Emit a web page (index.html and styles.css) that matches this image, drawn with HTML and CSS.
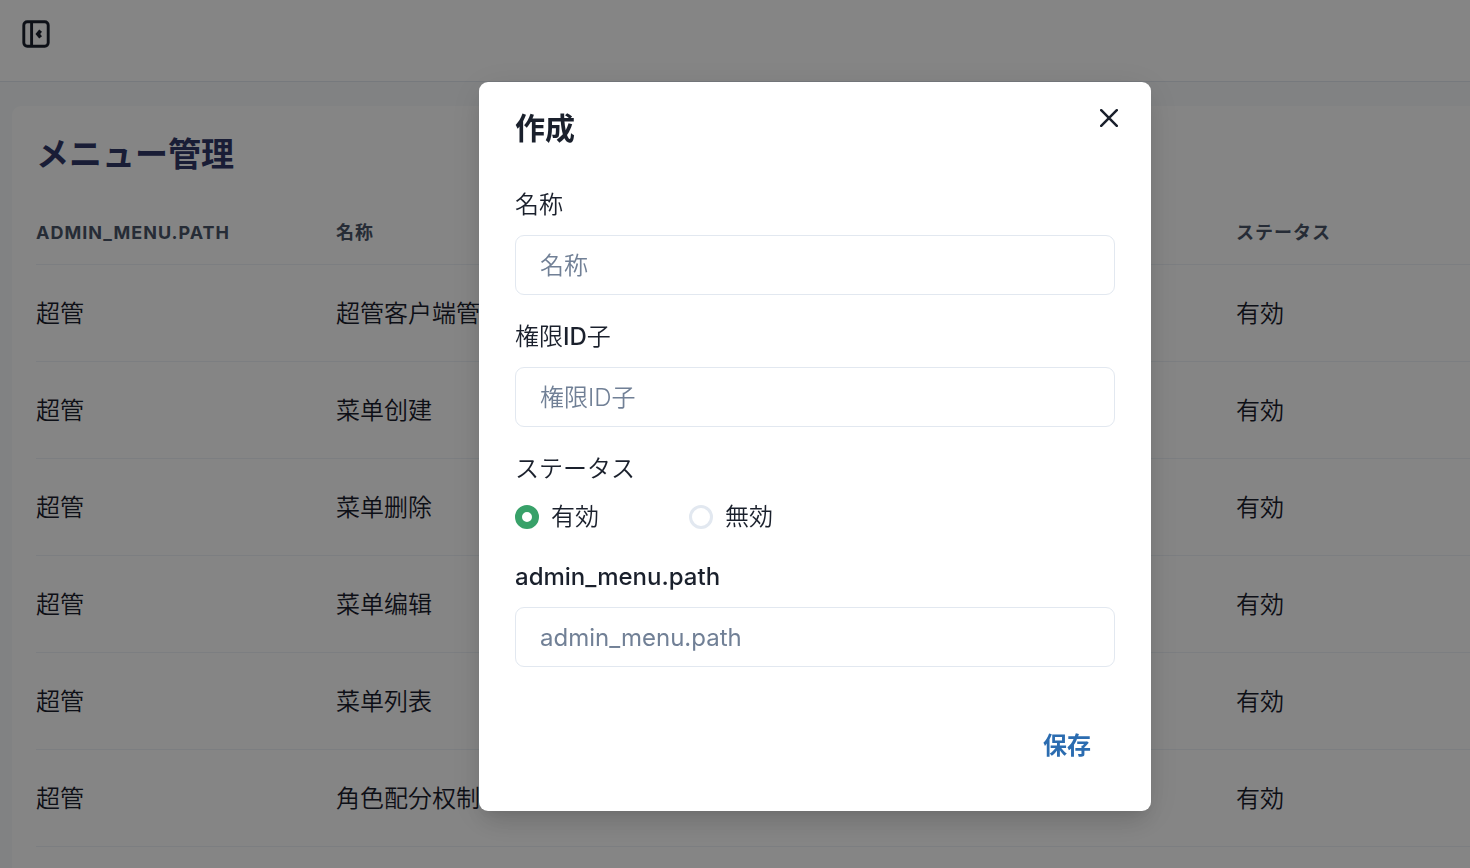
FILE: index.html
```html
<!DOCTYPE html>
<html lang="ja">
<head>
<meta charset="utf-8">
<title>メニュー管理</title>
<link rel="stylesheet" href="styles.css">
</head>
<body>
<div class="page">
  <header class="topbar">
    <button class="collapse" type="button" aria-label="サイドバーを閉じる">
      <svg viewBox="0 0 28 28" width="28" height="28" fill="none" stroke="currentColor" stroke-width="2.9">
        <rect x="1.8" y="1.8" width="24.4" height="24.4" rx="3.4"/>
        <path d="M9.6 1.8v24.4"/>
        <path d="M18.6 10.6 15.8 14l2.8 3.4" stroke-width="3.6"/>
      </svg>
    </button>
  </header>
  <main class="card">
    <h1 class="card-title">メニュー管理</h1>
    <table class="menu-table">
      <thead>
        <tr><th class="latin">admin_menu.path</th><th>名称</th><th></th><th></th><th>ステータス</th></tr>
      </thead>
      <tbody>
        <tr><td>超管</td><td>超管客户端管理</td><td></td><td></td><td>有効</td></tr>
        <tr><td>超管</td><td>菜单创建</td><td></td><td></td><td>有効</td></tr>
        <tr><td>超管</td><td>菜单删除</td><td></td><td></td><td>有効</td></tr>
        <tr><td>超管</td><td>菜单编辑</td><td></td><td></td><td>有効</td></tr>
        <tr><td>超管</td><td>菜单列表</td><td></td><td></td><td>有効</td></tr>
        <tr><td>超管</td><td>角色配分权制</td><td></td><td></td><td>有効</td></tr>
      </tbody>
    </table>
  </main>
</div>
<div class="overlay">
  <form class="modal" role="dialog" aria-modal="true" aria-labelledby="modal-title">
    <h2 class="modal-title" id="modal-title">作成</h2>
    <button class="close" type="button" aria-label="閉じる">
      <svg viewBox="0 0 18 18" width="18" height="18" fill="none" stroke="currentColor" stroke-width="2.5" stroke-linecap="round"><path d="M1.2 1.2l15.6 15.6M16.8 1.2L1.2 16.8"/></svg>
    </button>
    <div class="modal-body">
      <div class="field">
        <label class="label" for="name">名称</label>
        <input class="input" id="name" type="text" placeholder="名称">
      </div>
      <div class="field">
        <label class="label" for="slug">権限<span class="latin">ID</span>子</label>
        <input class="input" id="slug" type="text" placeholder="権限ID子">
      </div>
      <div class="field" role="radiogroup" aria-labelledby="status-label">
        <span class="label" id="status-label">ステータス</span>
        <div class="radios">
          <label class="radio"><input class="radio-input" type="radio" name="status" checked>有効</label>
          <label class="radio"><input class="radio-input" type="radio" name="status">無効</label>
        </div>
      </div>
      <div class="field">
        <label class="label latin" for="path">admin_menu.path</label>
        <input class="input input-latin" id="path" type="text" placeholder="admin_menu.path">
      </div>
    </div>
    <footer class="modal-footer">
      <button class="save" type="submit">保存</button>
    </footer>
  </form>
</div>
</body>
</html>
```
FILE: styles.css
```css
* {
  box-sizing: border-box;
}

body {
  margin: 0;
  height: 100vh;
  overflow: hidden;
  background: #f7fafc;
  color: #1a202c;
  font-family: Inter, "Noto Sans CJK JP", "Noto Sans CJK SC", sans-serif;
  font-size: 24px;
  font-weight: 350;
  line-height: 36px;
}

button,
input {
  font: inherit;
  color: inherit;
}

button {
  border: 0;
  background: none;
  cursor: pointer;
}

.page {
  height: 100%;
  overflow: hidden;
}

.topbar {
  height: 82px;
  padding: 20px 22px;
  background: #fff;
  border-bottom: 1px solid #e2e8f0;
}

.collapse {
  display: flex;
  padding: 0;
}

.card {
  margin: 24px 0 0 12px;
  padding: 24px 0 48px 24px;
  overflow: hidden;
  background: #fff;
  border-radius: 9px 0 0 0;
}

.card-title {
  margin: 0 0 24px;
  color: #313869;
  font-size: 33px;
  font-weight: 600;
  line-height: 48px;
}

.menu-table {
  width: 1500px;
  table-layout: fixed;
  border-collapse: separate;
  border-spacing: 0;
}

.menu-table th {
  padding: 19px 36px 19px 0;
  border-bottom: 1px solid #edf2f7;
  color: #4a5568;
  font-size: 18px;
  font-weight: 600;
  line-height: 24px;
  letter-spacing: 1px;
  text-align: left;
  text-transform: uppercase;
  white-space: nowrap;
}

.menu-table th.latin {
  font-weight: 700;
}

.menu-table td {
  height: 97px;
  padding: 31px 36px 29px 0;
  border-bottom: 1px solid #edf2f7;
  white-space: nowrap;
}

.overlay {
  position: fixed;
  inset: 0;
  display: flex;
  align-items: flex-start;
  justify-content: center;
  padding: 82px 0 0 160px;
  background: rgba(0, 0, 0, 0.48);
}

.modal {
  position: relative;
  width: 672px;
  background: #fff;
  border-radius: 9px;
  box-shadow: 0 15px 23px -5px rgba(0, 0, 0, 0.1), 0 6px 9px -3px rgba(0, 0, 0, 0.05), 0 6px 36px rgba(0, 0, 0, 0.1);
}

.modal-title {
  margin: 0;
  padding: 24px 36px;
  font-size: 30px;
  font-weight: 600;
  line-height: 45px;
}

.close {
  position: absolute;
  top: 12px;
  right: 18px;
  display: flex;
  align-items: center;
  justify-content: center;
  width: 48px;
  height: 48px;
  padding: 0;
}

.modal-body {
  display: grid;
  gap: 24px;
  padding: 12px 36px;
}

.field {
  display: grid;
  gap: 12px;
}

.latin {
  font-weight: 500;
}

.input {
  width: 100%;
  height: 60px;
  padding: 0 24px;
  border: 1px solid #e2e8f0;
  border-radius: 9px;
  background: #fff;
}

.input-latin {
  font-weight: 400;
}

.input::placeholder {
  color: #718096;
  opacity: 1;
}

.radios {
  display: flex;
  gap: 90px;
}

.radio {
  display: flex;
  align-items: center;
  gap: 12px;
}

.radio-input {
  appearance: none;
  width: 24px;
  height: 24px;
  margin: 0;
  border: 3px solid #e2e8f0;
  border-radius: 50%;
}

.radio-input:checked {
  border: 7px solid #38a169;
}

.modal-footer {
  display: flex;
  justify-content: flex-end;
  padding: 36px;
}

.save {
  height: 60px;
  padding: 2px 24px 0;
  color: #2b6cb0;
  font-weight: 600;
}
```
